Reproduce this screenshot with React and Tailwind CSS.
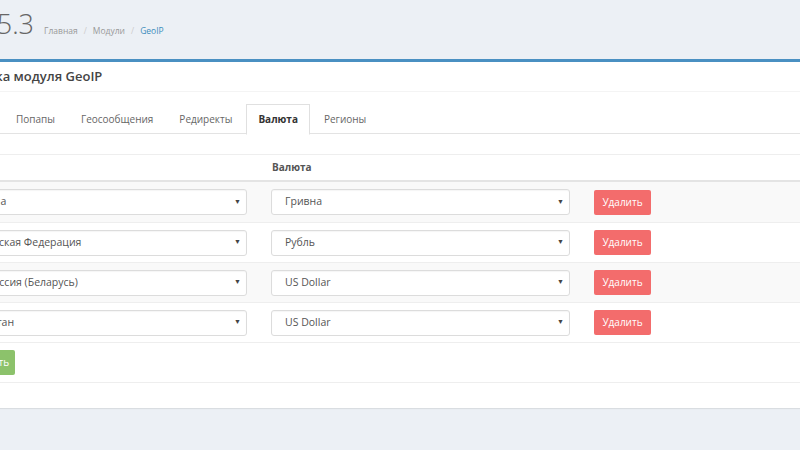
import React from 'react'

const rows = [
  { country: 'Украина', currency: 'Гривна' },
  { country: 'Российская Федерация', currency: 'Рубль' },
  { country: 'Белоруссия (Беларусь)', currency: 'US Dollar' },
  { country: 'Казахстан', currency: 'US Dollar' },
]

const tabs = ['Попапы', 'Геосообщения', 'Редиректы', 'Валюта', 'Регионы']

function Select({ value, width }) {
  return (
    <div className={`${width} h-[26px] flex items-center justify-between border border-[#dcdcdc] rounded-[3px] bg-white pl-[13px] pr-[5px] text-[10.5px] text-[#555] shadow-[inset_0_1px_1px_rgba(0,0,0,0.04)]`}>
      <span className="whitespace-nowrap">{value}</span>
      <span className="text-[7px] text-[#444]">▼</span>
    </div>
  )
}

function App() {
  return (
    <div className="w-[800px] h-[450px] overflow-hidden bg-[#ecf0f5] font-['Open_Sans',sans-serif]">
      <div className="-ml-[62px] w-[1000px]">
        {/* page header */}
        <div className="h-[59px] flex items-baseline pt-[10px]">
          <div className="w-[96px] flex justify-end">
            <h1 className="whitespace-nowrap text-[27px] font-light text-[#666] leading-none">GeoIP 5.3</h1>
          </div>
          <div className="ml-[10px] flex items-center gap-[6px] text-[8.5px] text-[#999]">
            <span>Главная</span>
            <span className="text-[#ccc]">/</span>
            <span>Модули</span>
            <span className="text-[#ccc]">/</span>
            <span className="text-[#3c8dbc]">GeoIP</span>
          </div>
        </div>

        {/* box */}
        <div className="bg-white border-t-[3px] border-[#4a90c2] shadow-[0_1px_1px_rgba(0,0,0,0.08)]">
          <div className="h-[30px] flex items-center pl-[2px] border-b border-[#f4f4f4]">
            <h3 className="text-[13px] font-semibold text-[#444]">Настройка модуля GeoIP</h3>
          </div>
          <div className="px-[10px] pt-[12px] pb-[10px]">
            <div className="flex border-b border-[#e3e3e3] h-[30px]">
              <div className="w-[54px] mr-[2px] flex items-center justify-center text-[10px] text-[#666]">Общие</div>
              {tabs.map(t => (
                t === 'Валюта'
                  ? <div key={t} className="h-[31px] px-[11px] mr-[2px] flex items-center border border-[#e0e0e0] border-b-white bg-white text-[10px] font-bold text-[#333]">{t}</div>
                  : <div key={t} className="h-[30px] px-[12px] mr-[2px] flex items-center text-[10px] text-[#666]">{t}</div>
              ))}
            </div>

            <div className="mt-[20px] mb-[15px] border-t border-[#eee] border-b">
              <div className="h-[27px] flex items-center pl-[1px] border-b-2 border-[#e4e4e4] text-[10px] font-bold text-[#555]">
                <div className="w-[298px] pl-[1px]">Страна</div>
                <div className="ml-[24px] pl-[1px]">Валюта</div>
              </div>
              {rows.map((r, i) => (
                <div key={i} className={`h-[40px] flex items-center pl-[1px] ${i > 0 ? 'border-t border-[#eeeeee]' : ''} ${i % 2 === 0 ? 'bg-[#f9f9f9]' : 'bg-white'}`}>
                  <Select value={r.country} width="w-[298px]" />
                  <div className="ml-[24px]">
                    <Select value={r.currency} width="w-[299px]" />
                  </div>
                  <button className="ml-[24px] w-[57px] h-[25px] rounded-[2px] bg-[#f36c6c] text-white text-[10px]">Удалить</button>
                </div>
              ))}
              <div className="h-[40px] flex items-center pl-[8px] border-t border-[#eeeeee]">
                <button className="h-[25px] px-[6px] rounded-[2px] bg-[#8cc26b] text-white text-[10px] whitespace-nowrap">Добавить</button>
              </div>
            </div>
          </div>
        </div>
      </div>
    </div>
  )
}

export default App
